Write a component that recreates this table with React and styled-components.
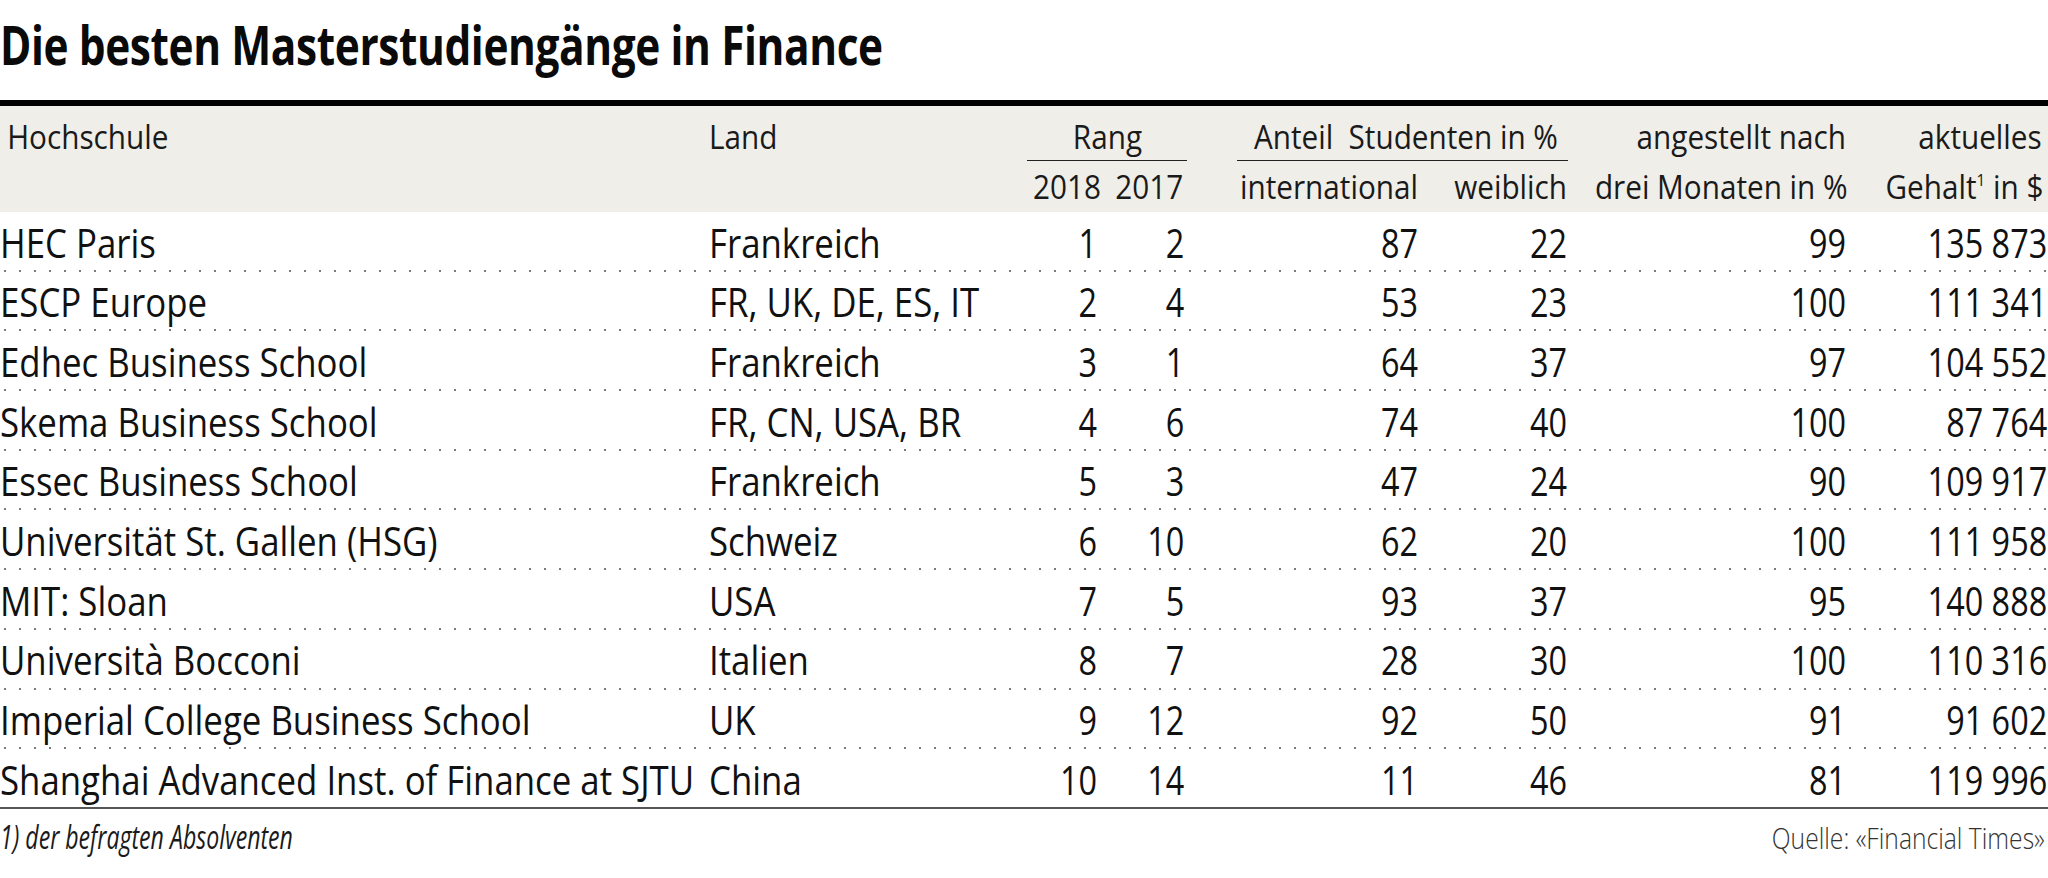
import React from "react";
import styled, { createGlobalStyle } from "styled-components";

const GlobalStyle = createGlobalStyle`
  html, body {
    margin: 0;
    padding: 0;
    background: #ffffff;
  }
  body {
    font-family: "Open Sans", "Liberation Sans", sans-serif;
    color: #111;
  }
`;

// column widths measured from the reference (2048 wide)
const COLS = "709px 317px 71px 89px 232px 149px 279px 1fr";

// the print face is a condensed humanist sans; Open Sans squeezed comes closest
const SQUEEZE = 0.87;
const NUM_SQUEEZE = 0.81;
const HEAD_SQUEEZE = 0.9;

const rows = [
  ["HEC Paris", "Frankreich", "1", "2", "87", "22", "99", "135\u00A0873"],
  ["ESCP Europe", "FR, UK, DE, ES, IT", "2", "4", "53", "23", "100", "111\u00A0341"],
  ["Edhec Business School", "Frankreich", "3", "1", "64", "37", "97", "104\u00A0552"],
  ["Skema Business School", "FR, CN, USA, BR", "4", "6", "74", "40", "100", "87\u00A0764"],
  ["Essec Business School", "Frankreich", "5", "3", "47", "24", "90", "109\u00A0917"],
  ["Universität St. Gallen (HSG)", "Schweiz", "6", "10", "62", "20", "100", "111\u00A0958"],
  ["MIT: Sloan", "USA", "7", "5", "93", "37", "95", "140\u00A0888"],
  ["Università Bocconi", "Italien", "8", "7", "28", "30", "100", "110\u00A0316"],
  ["Imperial College Business School", "UK", "9", "12", "92", "50", "91", "91\u00A0602"],
  ["Shanghai Advanced Inst. of Finance at SJTU", "China", "10", "14", "11", "46", "81", "119\u00A0996"],
];

const Page = styled.div`
  width: 2048px;
  padding-top: 18px;
`;

const Title = styled.h1`
  margin: 0 0 29px 0;
  font-size: 53px;
  line-height: 53px;
  font-weight: 700;
  letter-spacing: -0.5px;
  color: #0a0a0a;
  white-space: nowrap;
  transform: scaleX(0.8);
  transform-origin: left center;
`;

const Head = styled.div`
  display: grid;
  grid-template-columns: ${COLS};
  grid-template-rows: 50px 40px;
  border-top: 6px solid #000;
  background: #efeee9;
  padding: 11px 0 5px 0;
  font-size: 33px;
  line-height: 40px;
  color: #1a1a1a;
`;

const HeadCell = styled.div`
  grid-column: ${(p) => p.$col};
  grid-row: ${(p) => p.$row};
  text-align: ${(p) => p.$align || "right"};
  padding-left: ${(p) => p.$pl || 0}px;
  padding-right: ${(p) => p.$pr || 0}px;
  white-space: nowrap;
  transform: scaleX(${HEAD_SQUEEZE});
  transform-origin: ${(p) => (p.$align === "left" ? "left" : "right")} center;
`;

const Group = styled.div`
  grid-column: ${(p) => p.$col};
  grid-row: 1;
  justify-self: end;
  align-self: start;
  width: ${(p) => p.$w}px;
  margin-right: ${(p) => p.$mr || 0}px;
  text-align: center;
  padding-bottom: 3px;
  border-bottom: 1.5px solid #222;
  white-space: nowrap;
`;

const GroupLabel = styled.span`
  display: inline-block;
  transform: scaleX(${HEAD_SQUEEZE});
  transform-origin: center;
  white-space: pre;
`;

const Sup = styled.span`
  font-size: 17px;
  vertical-align: 13px;
  line-height: 0;
`;

const Row = styled.div`
  display: grid;
  grid-template-columns: ${COLS};
  height: 59.7px;
  box-sizing: border-box;
  padding-top: 8.5px;
  font-size: 40px;
  line-height: 44px;
  color: #111;
  background-image: ${(p) =>
    p.$last ? "none" : "linear-gradient(to right, #7a7a7a 2px, transparent 2px)"};
  background-size: 15px 2px;
  background-repeat: repeat-x;
  background-position: 4px bottom;
  border-bottom: ${(p) => (p.$last ? "2px solid #555" : "none")};
`;

const Cell = styled.div`
  text-align: ${(p) => (p.$num ? "right" : "left")};
  padding-right: ${(p) => p.$pr || 0}px;
  white-space: nowrap;
  transform: scaleX(${(p) => (p.$num ? NUM_SQUEEZE : SQUEEZE)});
  transform-origin: ${(p) => (p.$num ? "right" : "left")} center;
`;

const Footer = styled.div`
  display: flex;
  justify-content: space-between;
  align-items: baseline;
  margin-top: 8px;
`;

const Note = styled.div`
  font-size: 33px;
  line-height: 40px;
  font-style: italic;
  color: #1a1a1a;
  transform: scaleX(0.7);
  transform-origin: left center;
`;

const Source = styled.div`
  font-size: 29px;
  line-height: 40px;
  font-weight: 300;
  color: #333;
  padding-right: 4px;
  transform: scaleX(0.85);
  transform-origin: right center;
`;

export default function App() {
  return (
    <Page>
      <GlobalStyle />
      <Title>Die besten Masterstudiengänge in Finance</Title>
      <Head>
        <HeadCell $col="1" $row="1" $align="left" $pl={8}>
          Hochschule
        </HeadCell>
        <HeadCell $col="2" $row="1" $align="left">
          Land
        </HeadCell>
        <Group $col="3 / span 2" $w={160} $mr={-1}>
          <GroupLabel>Rang</GroupLabel>
        </Group>
        <Group $col="5 / span 2" $w={331} $mr={-1}>
          <GroupLabel>{"Anteil  Studenten in %"}</GroupLabel>
        </Group>
        <HeadCell $col="7" $row="1">angestellt nach</HeadCell>
        <HeadCell $col="8" $row="1" $pr={7}>
          aktuelles
        </HeadCell>
        <HeadCell $col="3" $row="2">2018</HeadCell>
        <HeadCell $col="4" $row="2" $pr={3}>2017</HeadCell>
        <HeadCell $col="5" $row="2">international</HeadCell>
        <HeadCell $col="6" $row="2">weiblich</HeadCell>
        <HeadCell $col="7" $row="2">drei Monaten in %</HeadCell>
        <HeadCell $col="8" $row="2" $pr={5}>
          Gehalt<Sup>1</Sup> in $
        </HeadCell>
      </Head>
      {rows.map((r, i) => (
        <Row key={r[0]} $last={i === rows.length - 1}>
          <Cell>{r[0]}</Cell>
          <Cell>{r[1]}</Cell>
          <Cell $num>{r[2]}</Cell>
          <Cell $num $pr={2}>{r[3]}</Cell>
          <Cell $num>{r[4]}</Cell>
          <Cell $num>{r[5]}</Cell>
          <Cell $num>{r[6]}</Cell>
          <Cell $num $pr={1}>{r[7]}</Cell>
        </Row>
      ))}
      <Footer>
        <Note>1) der befragten Absolventen</Note>
        <Source>Quelle: «Financial Times»</Source>
      </Footer>
    </Page>
  );
}
